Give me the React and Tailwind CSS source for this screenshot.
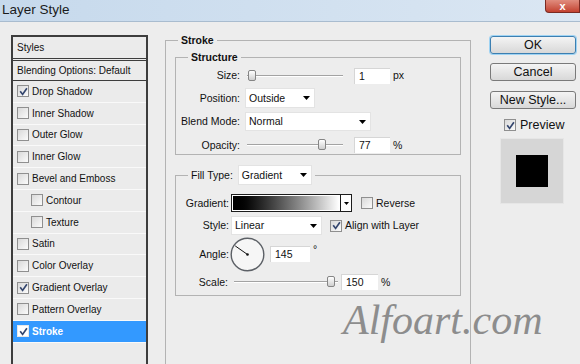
import React from 'react';

const Check = ({ checked, onBlue }) => (
  <span
    className={`w-[12px] h-[12px] border shrink-0 flex items-center justify-center ${
      onBlue ? 'border-[#e8e8e8] bg-white' : 'border-[#8f8f8f] bg-linear-to-br from-[#d9d9d9] to-[#fbfbfb]'
    }`}
  >
    {checked && (
      <svg width="9" height="9" viewBox="0 0 9 9">
        <path d="M1.2 4.3 L3.6 7.4 L7.9 1.2" stroke="#34466e" strokeWidth="1.7" fill="none" />
      </svg>
    )}
  </span>
);

const Arrow = () => (
  <svg width="7" height="4" viewBox="0 0 7 4" className="shrink-0">
    <polygon points="0,0 7,0 3.5,4" fill="#000" />
  </svg>
);

const Select = ({ value, className }) => (
  <div className={`flex items-center justify-between bg-white border border-[#e3e3e3] pl-[3px] pr-[4px] ${className}`}>
    <span>{value}</span>
    <Arrow />
  </div>
);

const Field = ({ value, className }) => (
  <div className={`bg-white border-t border-l border-[#d6d6d6] pl-[4px] flex items-center ${className}`}>{value}</div>
);

const Slider = ({ className, thumb }) => (
  <div className={`relative h-[12px] ${className}`}>
    <div className="absolute left-0 right-0 top-[5px] h-[2px] border-t border-[#a3a3a3] border-b border-b-white" />
    <div className={`absolute top-0 w-[8px] h-[11px] rounded-[2px] border border-[#858585] bg-linear-to-b from-white to-[#cfcfcf] ${thumb}`} />
  </div>
);

const Button = ({ children, primary }) => (
  <div
    className={`h-[18px] flex items-center justify-center rounded-[3px] border bg-linear-to-b from-[#f4f4f4] to-[#d8d8d8] text-[12.5px] ${
      primary ? 'border-[#3c7fb1] shadow-[0_0_0_1px_#9fd3f3]' : 'border-[#7a7a7a]'
    }`}
  >
    {children}
  </div>
);

const styles = [
  { label: 'Drop Shadow', checked: true },
  { label: 'Inner Shadow' },
  { label: 'Outer Glow' },
  { label: 'Inner Glow' },
  { label: 'Bevel and Emboss' },
  { label: 'Contour', indent: true },
  { label: 'Texture', indent: true },
  { label: 'Satin' },
  { label: 'Color Overlay' },
  { label: 'Gradient Overlay', checked: true },
  { label: 'Pattern Overlay' },
  { label: 'Stroke', checked: true, active: true },
];

export default function App() {
  return (
    <div className="relative w-[580px] h-[364px] overflow-hidden bg-[#ededed] text-[10.5px] leading-[13px] text-[#111] font-['Liberation_Sans',Arial,sans-serif]">
      {/* title bar */}
      <div className="h-[22px] flex items-start justify-between bg-linear-to-r from-[#c6d9ec] to-[#dbe7f3] border-b border-[#a9bccf]">
        <span className="pl-[2px] pt-[2px] text-[13.5px] leading-[16px] text-[#1b1b1b]">Layer Style</span>
        <div className="w-[35px] h-[13px] rounded-bl-[4px] border border-t-0 border-[#7a2a22] bg-linear-to-b from-[#e08c7e] to-[#c2402f] flex items-center justify-center text-white text-[11px] leading-[11px] font-bold">
          x
        </div>
      </div>

      <div className="flex items-start">
        {/* styles list */}
        <div className="ml-[11px] mt-[13px] w-[137px] h-[340px] border-2 border-[#3d3d3d] bg-[#ebebeb] text-[10px]">
          <div className="h-[24px] flex items-center pl-[4px] border-b-[3px] border-double border-[#3d3d3d]">Styles</div>
          <div className="h-[20px] flex items-center pl-[4px] border-b border-[#3d3d3d]">Blending Options: Default</div>
          {styles.map((s) => (
            <div
              key={s.label}
              className={`h-[21.8px] flex items-center gap-[3px] border-b border-[#f9f9f9] ${s.indent ? 'pl-[18px]' : 'pl-[4px]'} ${
                s.active ? 'bg-[#3399ff] text-white font-bold' : ''
              }`}
            >
              <Check checked={s.checked} onBlue={s.active} />
              <span>{s.label}</span>
            </div>
          ))}
        </div>

        {/* main settings */}
        <fieldset className="ml-[17px] mt-[12px] w-[306px] h-[350px] border border-[#b3b3b3]">
          <legend className="ml-[12px] px-[3px] font-bold">Stroke</legend>
          <div className="px-[9px]">
            <fieldset className="mt-[4px] border border-[#b3b3b3] pb-[1px]">
              <legend className="ml-[12px] px-[3px] font-bold">Structure</legend>
              <div className="mt-[3px] h-[17px] flex items-center">
                <span className="w-[64px] text-right">Size:</span>
                <Slider className="ml-[7px] w-[96px]" thumb="left-[1px]" />
                <Field value="1" className="ml-[11px] w-[36px] h-[16px]" />
                <span className="ml-[3px]">px</span>
              </div>
              <div className="mt-[4px] h-[20px] flex items-center">
                <span className="w-[64px] text-right">Position:</span>
                <Select value="Outside" className="ml-[5px] w-[70px] h-[20px]" />
              </div>
              <div className="mt-[4px] h-[19px] flex items-center">
                <span className="w-[64px] text-right">Blend Mode:</span>
                <Select value="Normal" className="ml-[5px] w-[126px] h-[19px]" />
              </div>
              <div className="mt-[6px] h-[16px] flex items-center">
                <span className="w-[64px] text-right">Opacity:</span>
                <Slider className="ml-[7px] w-[96px]" thumb="left-[71px]" />
                <Field value="77" className="ml-[11px] w-[36px] h-[16px]" />
                <span className="ml-[3px]">%</span>
              </div>
            </fieldset>

            <fieldset className="mt-[10px] border border-[#b3b3b3] pb-[5px]">
              <legend className="ml-[12px] px-[3px] flex items-center">
                <span>Fill Type:</span>
                <Select value="Gradient" className="ml-[5px] w-[74px] h-[20px]" />
              </legend>
              <div className="mt-[9px] h-[18px] flex items-center">
                <span className="w-[53px] text-right">Gradient:</span>
                <div className="ml-[2px] w-[121px] h-[18px] flex border border-[#1c1c1c] bg-white">
                  <div className="flex-1 m-[1px] bg-linear-to-r from-black via-[#666] to-white" />
                  <div className="w-[11px] border-l border-[#1c1c1c] flex items-center justify-center">
                    <svg width="5" height="3" viewBox="0 0 5 3">
                      <polygon points="0,0 5,0 2.5,3" fill="#000" />
                    </svg>
                  </div>
                </div>
                <span className="ml-[9px]">
                  <Check />
                </span>
                <span className="ml-[3px]">Reverse</span>
              </div>
              <div className="mt-[4px] h-[19px] flex items-center">
                <span className="w-[53px] text-right">Style:</span>
                <Select value="Linear" className="ml-[2px] w-[91px] h-[19px]" />
                <span className="ml-[8px]">
                  <Check checked />
                </span>
                <span className="ml-[3px]">Align with Layer</span>
              </div>
              <div className="mt-[2px] h-[34px] flex items-center">
                <span className="w-[53px] text-right">Angle:</span>
                <svg width="35" height="35" viewBox="0 0 35 35" className="ml-[1px]">
                  <circle cx="17.5" cy="17.5" r="16.3" fill="#f6f6f6" stroke="#5c6066" strokeWidth="1.4" />
                  <line x1="17.5" y1="17.5" x2="5.2" y2="8.9" stroke="#111" strokeWidth="1" />
                  <circle cx="17.5" cy="17.5" r="1.3" fill="#111" />
                </svg>
                <Field value="145" className="ml-[5px] w-[40px] h-[16px]" />
                <span className="ml-[3px] self-start mt-[6px]">°</span>
              </div>
              <div className="mt-[3px] h-[16px] flex items-center">
                <span className="w-[52px] text-right">Scale:</span>
                <Slider className="ml-[6px] w-[104px]" thumb="left-[93px]" />
                <Field value="150" className="ml-[3px] w-[37px] h-[16px]" />
                <span className="ml-[3px]">%</span>
              </div>
            </fieldset>
          </div>
        </fieldset>

        {/* buttons */}
        <div className="ml-[19px] mt-[14px] w-[86px] flex flex-col">
          <Button primary>OK</Button>
          <div className="mt-[9px]">
            <Button>Cancel</Button>
          </div>
          <div className="mt-[10px]">
            <Button>New Style...</Button>
          </div>
          <div className="mt-[9px] ml-[14px] flex items-center gap-[4px] text-[12.5px] leading-[14px]">
            <Check checked />
            <span>Preview</span>
          </div>
          <div className="mt-[6px] ml-[10px] w-[64px] h-[66px] bg-[#d6d6d6] border border-[#e6e6e6] flex items-center justify-center">
            <div className="w-[32px] h-[32px] bg-black" />
          </div>
        </div>
      </div>

      {/* watermark */}
      <div className="absolute left-[343px] top-[296px] text-[42px] leading-[48px] italic text-[#8d8d8d] font-['Liberation_Serif',serif]">
        Alfoart.com
      </div>
    </div>
  );
}
